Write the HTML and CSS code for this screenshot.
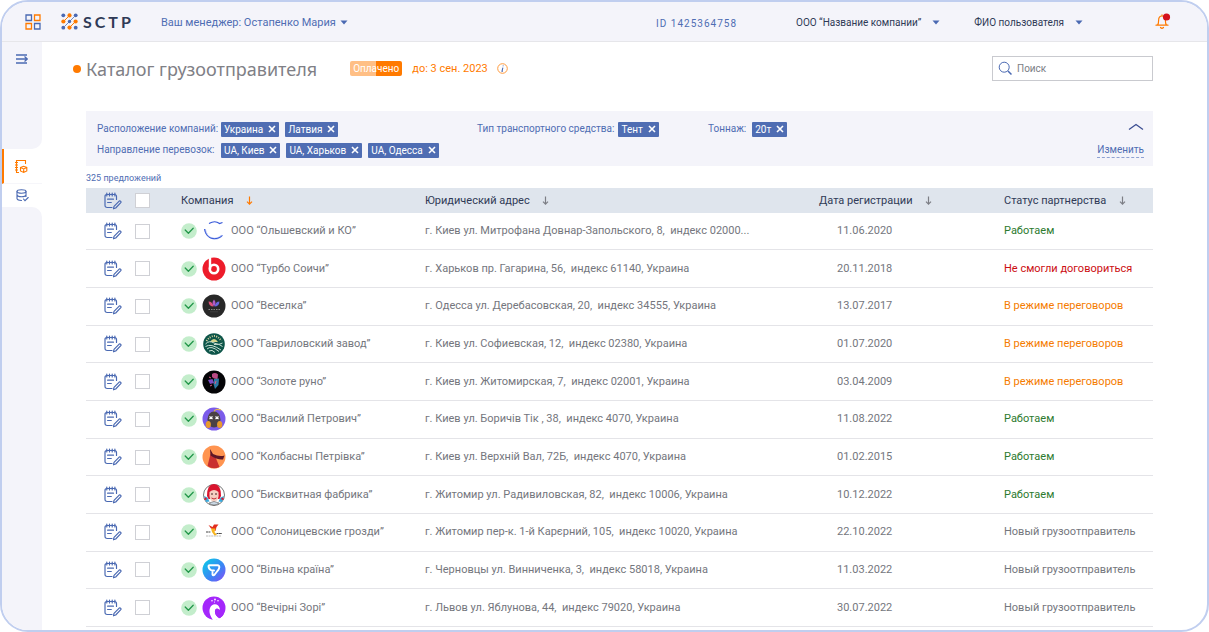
FILE: index.html
```html
<!DOCTYPE html>
<html lang="ru">
<head>
<meta charset="utf-8">
<meta name="viewport" content="width=device-width, initial-scale=1">
<title>SCTP — Каталог грузоотправителя</title>
<link rel="stylesheet" href="styles.css">
</head>
<body>
<svg class="sprite" aria-hidden="true">
  <symbol id="edit" viewBox="0 0 18 18">
    <g fill="none" stroke="#4a69b2" stroke-width="1.2" stroke-linecap="round" stroke-linejoin="round">
      <path d="M8 15.5H3.2Q1 15.500 1 13.300V4.500Q1 2.500 3 2.500H10.500Q12.500 2.500 12.500 4.500V7.500"/>
      <path d="M2.800 1V4M5.500 1V4M8.200 1V4M10.900 1V4M3.600 7.200H9.500M3.600 10.500H7.300"/>
      <path d="M9.500 16.800L10 14.300L15.200 9.100Q16 8.600 16.700 9.300Q17.300 10 16.800 10.700L11.700 16Z"/>
    </g>
  </symbol>
  <symbol id="ok" viewBox="0 0 16 16">
    <circle cx="8" cy="8" r="7.800" fill="#c3edcb"/>
    <path d="M4.200 7L7.400 10.300L12.200 5.300" fill="none" stroke="#23974a" stroke-width="1.300" stroke-linecap="round" stroke-linejoin="round"/>
  </symbol>
  <symbol id="cross" viewBox="0 0 8 8"><path d="M1 1L7 7M7 1L1 7" stroke="#fff" stroke-width="1.600"/></symbol>
  <symbol id="caret" viewBox="0 0 8 5"><path d="M0.500 0.500H7.500L4 4.500Z" fill="#4a69b2"/></symbol>
  <symbol id="sort" viewBox="0 0 7 9"><path d="M3.500 0.500V8M1 5.600L3.500 8.100L6 5.600" fill="none" stroke="currentColor" stroke-width="1.200"/></symbol>
</svg>
<div class="frame">
  <header class="topbar">
    <button class="icon-button" type="button" aria-label="Приложения">
      <svg width="16" height="16" viewBox="0 0 16 16" fill="none" stroke-width="1.300"><path d="M1 1H6.500V6.500H1ZM9.500 9.500H15V15H9.500Z" stroke="#4a69b2"/><path d="M9.500 1H15V6.500H9.500ZM1 9.500H6.500V15H1Z" stroke="#ff7a00"/></svg>
    </button>
    <a class="brand" href="#">
      <svg width="17" height="17" viewBox="0 0 17 17">
        <path d="M2.500 8.500L8.500 2.500M8.500 14.500L14.500 8.500" stroke="#ff7a00" stroke-width="1"/>
        <path d="M3.500 13.500L13.500 3.500" stroke="#4a69b2" stroke-width=".8"/>
        <g fill="#4a69b2"><circle cx="2.300" cy="2.300" r="1.900"/><circle cx="14.700" cy="2.300" r="1.900"/><circle cx="8.500" cy="8.500" r="1.700"/><circle cx="2.300" cy="14.700" r="1.900"/><circle cx="14.700" cy="14.700" r="1.900"/></g>
        <g fill="#ff7a00"><circle cx="8.500" cy="2.400" r="2.100"/><circle cx="2.400" cy="8.500" r="2.100"/><circle cx="14.600" cy="8.500" r="2.100"/><circle cx="8.500" cy="14.600" r="2.100"/></g>
      </svg>
      <span class="brand-name">SCTP</span>
    </a>
    <button class="menu manager" type="button">Ваш менеджер: Остапенко Мария <svg width="8" height="5"><use href="#caret"/></svg></button>
    <span class="account-id">ID 1425364758</span>
    <button class="menu company" type="button">ООО “Название компании” <svg width="8" height="5"><use href="#caret"/></svg></button>
    <button class="menu user" type="button">ФИО пользователя <svg width="8" height="5"><use href="#caret"/></svg></button>
    <button class="icon-button bell" type="button" aria-label="Уведомления">
      <svg width="16" height="17" viewBox="0 0 16 17"><path d="M2.500 12Q3.600 11 3.600 7.500Q3.600 3 7 3Q10.400 3 10.400 7.500Q10.400 11 11.500 12ZM1 12.200H13M5.500 14.500Q7 16 8.500 14.500M7 1.800V3" fill="none" stroke="#ff7a00" stroke-width="1.200" stroke-linecap="round"/><circle cx="11.500" cy="4" r="3.600" fill="#d4101c"/></svg>
    </button>
  </header>
  <div class="body">
    <nav class="sidebar" aria-label="Разделы">
      <div class="side-top">
        <button class="icon-button" type="button" aria-label="Развернуть меню">
          <svg width="14" height="12" viewBox="0 0 14 12" fill="none" stroke="#4a69b2" stroke-width="1.300"><path d="M1 2H12M1 6H12.500M1 10H12M9.500 3.500L12.300 6L9.500 8.500"/></svg>
        </button>
      </div>
      <a class="side-link active" href="#" aria-label="Каталог">
        <svg width="14" height="15" viewBox="0 0 14 15" fill="none" stroke="#ff7a00" stroke-width="1.100"><path d="M11.500 5V1.500H2.500V13.500H5M1 3.500H4M1 6H4M1 8.500H4M1 11H4"/><path d="M6.500 8.500L9.500 7.300L12.800 8.500V12L9.700 13.500L6.500 12ZM6.500 8.500L9.700 10L12.800 8.500M9.700 10V13"/></svg>
      </a>
      <a class="side-link" href="#" aria-label="База данных">
        <svg width="13" height="13" viewBox="0 0 13 13" fill="none" stroke="#4a69b2" stroke-width="1.100" stroke-linecap="round"><ellipse cx="5.500" cy="2.500" rx="4.500" ry="1.700"/><path d="M1 2.500V9.700Q1.500 11.500 5.500 11.500M10 2.500V7.500M1 6Q1.500 7.700 5.500 7.700Q9.500 7.700 10 6M7.500 10L9 11.700L12.200 8.500"/></svg>
      </a>
      <div class="side-bottom"></div>
    </nav>
    <main class="content">
      <div class="heading">
        <h1>Каталог грузоотправителя</h1>
        <span class="paid">Оплачено</span>
        <span class="until">до: 3 сен. 2023</span>
        <button class="icon-button" type="button" aria-label="Информация">
          <svg width="11" height="11" viewBox="0 0 11 11" fill="none"><circle cx="5.500" cy="5.500" r="4.800" stroke="#ff9a3d"/><path d="M5.900 4.600L5 8.200H6M6.200 2.500L6.100 3.300" stroke="#4a69b2" stroke-width="1.100"/></svg>
        </button>
        <label class="search">
          <svg width="15" height="15" viewBox="0 0 15 15" fill="none" stroke="#4a69b2"><circle cx="6.200" cy="6.200" r="5" /><path d="M10 10L13.500 13.500" stroke-width="1.500"/></svg>
          <input type="search" placeholder="Поиск" aria-label="Поиск">
        </label>
      </div>

      <section class="filters" aria-label="Фильтры">
        <div class="filter-row">
          <div class="filter wide">
            <span class="filter-label">Расположение компаний:</span>
            <span class="tag">Украина <button type="button" aria-label="Удалить Украина"><svg width="8" height="8"><use href="#cross"/></svg></button></span>
            <span class="tag">Латвия <button type="button" aria-label="Удалить Латвия"><svg width="8" height="8"><use href="#cross"/></svg></button></span>
          </div>
          <div class="filter transport">
            <span class="filter-label">Тип транспортного средства:</span>
            <span class="tag">Тент <button type="button" aria-label="Удалить Тент"><svg width="8" height="8"><use href="#cross"/></svg></button></span>
          </div>
          <div class="filter">
            <span class="filter-label">Тоннаж:</span>
            <span class="tag">20т <button type="button" aria-label="Удалить 20т"><svg width="8" height="8"><use href="#cross"/></svg></button></span>
          </div>
          <button class="icon-button collapse" type="button" aria-label="Свернуть фильтры">
            <svg width="16" height="16" viewBox="0 0 16 16" fill="none" stroke="#3d4f93" stroke-width="1.300"><path d="M1 8.500L8 3.500L15 8.500"/></svg>
          </button>
        </div>
        <div class="filter-row">
          <div class="filter wide">
            <span class="filter-label">Направление перевозок:</span>
            <span class="tag">UA, Киев <button type="button" aria-label="Удалить Киев"><svg width="8" height="8"><use href="#cross"/></svg></button></span>
            <span class="tag">UA, Харьков <button type="button" aria-label="Удалить Харьков"><svg width="8" height="8"><use href="#cross"/></svg></button></span>
            <span class="tag">UA, Одесса <button type="button" aria-label="Удалить Одесса"><svg width="8" height="8"><use href="#cross"/></svg></button></span>
          </div>
          <a class="change" href="#">Изменить</a>
        </div>
      </section>

      <p class="count">325 предложений</p>

      <div class="table-area">
      <table class="companies">
        <colgroup><col class="c-edit"><col class="c-pick"><col class="c-name"><col><col class="c-date"><col class="c-status"></colgroup>
        <thead>
          <tr>
            <th class="edit"><button type="button" aria-label="Редактировать все"><svg width="18" height="18"><use href="#edit"/></svg></button></th>
            <th><input type="checkbox" aria-label="Выбрать все"></th>
            <th>Компания <button class="sort on" type="button" aria-label="Сортировать по компании"><svg width="7" height="9"><use href="#sort"/></svg></button></th>
            <th>Юридический адрес <button class="sort" type="button" aria-label="Сортировать по адресу"><svg width="7" height="9"><use href="#sort"/></svg></button></th>
            <th>Дата регистрации <button class="sort" type="button" aria-label="Сортировать по дате"><svg width="7" height="9"><use href="#sort"/></svg></button></th>
            <th>Статус партнерства <button class="sort" type="button" aria-label="Сортировать по статусу"><svg width="7" height="9"><use href="#sort"/></svg></button></th>
          </tr>
        </thead>
        <tbody>
          <tr>
            <td class="edit"><button type="button" aria-label="Редактировать"><svg width="18" height="18"><use href="#edit"/></svg></button></td>
            <td><input type="checkbox" aria-label="Выбрать Ольшевский и КО"></td>
            <td><div class="company-cell"><svg width="16" height="16"><use href="#ok"/></svg>
              <svg width="24" height="24" viewBox="0 0 24 24" fill="none"><path d="M3 10Q4 18 11 19.500Q16 20.500 20 16.500" stroke="#b9c6f5" stroke-width="1.800"/><path d="M7 4.500Q13 1 17.500 4.500L20.500 3.500" stroke="#3456d8" stroke-width="1.200"/><path d="M2.500 10Q3.500 17 9 19.200Q15.500 21 20.500 16.500" stroke="#3456d8" stroke-width="1"/></svg>
              ООО “Ольшевский и КО”</div></td>
            <td>г. Киев ул. Митрофана Довнар-Запольского, 8,&nbsp; индекс 02000...</td><td class="date">11.06.2020</td><td class="good">Работаем</td>
          </tr>
          <tr>
            <td class="edit"><button type="button" aria-label="Редактировать"><svg width="18" height="18"><use href="#edit"/></svg></button></td>
            <td><input type="checkbox" aria-label="Выбрать Турбо Соичи"></td>
            <td><div class="company-cell"><svg width="16" height="16"><use href="#ok"/></svg>
              <svg width="24" height="24" viewBox="0 0 24 24"><circle cx="12" cy="12" r="11.500" fill="#ed1c2b"/><path d="M8 1V12" stroke="#fff" stroke-width="2.400"/><circle cx="12" cy="12" r="4.200" fill="none" stroke="#fff" stroke-width="2.600"/></svg>
              ООО “Турбо Соичи”</div></td>
            <td>г. Харьков пр. Гагарина, 56,&nbsp; индекс 61140, Украина</td><td class="date">20.11.2018</td><td class="bad">Не смогли договориться</td>
          </tr>
          <tr>
            <td class="edit"><button type="button" aria-label="Редактировать"><svg width="18" height="18"><use href="#edit"/></svg></button></td>
            <td><input type="checkbox" aria-label="Выбрать Веселка"></td>
            <td><div class="company-cell"><svg width="16" height="16"><use href="#ok"/></svg>
              <svg width="24" height="24" viewBox="0 0 24 24"><circle cx="12" cy="12" r="11.500" fill="#282828"/><path d="M6.500 7.500Q10.500 7.500 11.500 12.500Q7 12.500 6.500 7.500Z" fill="#e0537c"/><path d="M17.500 7.500Q13.500 7.500 12.500 12.500Q17 12.500 17.500 7.500Z" fill="#6867e0"/><path d="M12 5.500Q15 9 12 12.500Q9 9 12 5.500Z" fill="#b05ac5"/><path d="M6.500 15.500H18" stroke="#888" stroke-dasharray="1.500 1"/><path d="M8 17.800H16" stroke="#555" stroke-width=".5"/></svg>
              ООО “Веселка”</div></td>
            <td>г. Одесса ул. Деребасовская, 20,&nbsp; индекс 34555, Украина</td><td class="date">13.07.2017</td><td class="talks">В режиме переговоров</td>
          </tr>
          <tr>
            <td class="edit"><button type="button" aria-label="Редактировать"><svg width="18" height="18"><use href="#edit"/></svg></button></td>
            <td><input type="checkbox" aria-label="Выбрать Гавриловский завод"></td>
            <td><div class="company-cell"><svg width="16" height="16"><use href="#ok"/></svg>
              <svg width="24" height="24" viewBox="0 0 24 24" fill="none"><circle cx="12" cy="12" r="10.800" fill="#0d5549"/><path d="M4.500 9Q12 -1 19.500 9" stroke="#d9d3a0" stroke-width="2" stroke-dasharray="1 1.300"/><path d="M8 10Q12 4 16 10" fill="#d8d48b"/><path d="M3.500 12Q7 8 12 11T20.500 11M3.500 14.500Q9 11 19 18M5 17Q9 13 17 19.500M7 19Q10 17 13 20.500M12 12.500Q17 11 20.500 14.500" stroke="#c7ded2" stroke-width="1"/></svg>
              ООО “Гавриловский завод”</div></td>
            <td>г. Киев ул. Софиевская, 12,&nbsp; индекс 02380, Украина</td><td class="date">01.07.2020</td><td class="talks">В режиме переговоров</td>
          </tr>
          <tr>
            <td class="edit"><button type="button" aria-label="Редактировать"><svg width="18" height="18"><use href="#edit"/></svg></button></td>
            <td><input type="checkbox" aria-label="Выбрать Золоте руно"></td>
            <td><div class="company-cell"><svg width="16" height="16"><use href="#ok"/></svg>
              <svg width="24" height="24" viewBox="0 0 24 24"><circle cx="12" cy="12" r="11.500" fill="#050507"/><path d="M10 4Q13 2 16 4.500L15.500 9Q12 9.500 10 7Z" fill="#b94a84"/><path d="M12 9L17 8.500L16.500 15L13 19L11.500 14Z" fill="#2c7aa3"/><path d="M6 10L10.500 9L12 13L8 14Z" fill="#7b4ec2"/><path d="M7 7L9 8M8 16L10 15M14 11L13 14" stroke="#e05a86"/></svg>
              ООО “Золоте руно”</div></td>
            <td>г. Киев ул. Житомирская, 7,&nbsp; индекс 02001, Украина</td><td class="date">03.04.2009</td><td class="talks">В режиме переговоров</td>
          </tr>
          <tr>
            <td class="edit"><button type="button" aria-label="Редактировать"><svg width="18" height="18"><use href="#edit"/></svg></button></td>
            <td><input type="checkbox" aria-label="Выбрать Василий Петрович"></td>
            <td><div class="company-cell"><svg width="16" height="16"><use href="#ok"/></svg>
              <svg width="24" height="24" viewBox="0 0 24 24"><circle cx="12" cy="12" r="11.500" fill="#7b5bea"/><path d="M12 5Q13 1 19 3" fill="none" stroke="#e0b250" stroke-width="1.300"/><ellipse cx="12" cy="12.500" rx="6.500" ry="8" fill="#4a4145"/><path d="M7.500 9.500L10.500 12M10.500 9.500L7.500 12M13.500 9.500L16.500 12M16.500 9.500L13.500 12" stroke="#fff" stroke-width="1.100"/><ellipse cx="6.300" cy="17.500" rx="2.600" ry="3.500" fill="#e89a2d"/><ellipse cx="17.700" cy="17.500" rx="2.600" ry="3.500" fill="#e89a2d"/></svg>
              ООО “Василий Петрович”</div></td>
            <td>г. Киев ул. Боричів Тік , 38,&nbsp; индекс 4070, Украина</td><td class="date">11.08.2022</td><td class="good">Работаем</td>
          </tr>
          <tr>
            <td class="edit"><button type="button" aria-label="Редактировать"><svg width="18" height="18"><use href="#edit"/></svg></button></td>
            <td><input type="checkbox" aria-label="Выбрать Колбасны Петрівка"></td>
            <td><div class="company-cell"><svg width="16" height="16"><use href="#ok"/></svg>
              <svg width="24" height="24" viewBox="0 0 24 24"><circle cx="12" cy="12" r="11.500" fill="#ff9450"/><path d="M8.500 9L13 11L17.500 22Q11 25 5.500 21Z" fill="#c9302f"/><path d="M8 4L11 9Q17 12 22.500 10.500L21 14.500Q15 15 8.500 10.500Z" fill="#5e1728"/></svg>
              ООО “Колбасны Петрівка”</div></td>
            <td>г. Киев ул. Верхній Вал, 72Б,&nbsp; индекс 4070, Украина</td><td class="date">01.02.2015</td><td class="good">Работаем</td>
          </tr>
          <tr>
            <td class="edit"><button type="button" aria-label="Редактировать"><svg width="18" height="18"><use href="#edit"/></svg></button></td>
            <td><input type="checkbox" aria-label="Выбрать Бисквитная фабрика"></td>
            <td><div class="company-cell"><svg width="16" height="16"><use href="#ok"/></svg>
              <svg width="24" height="24" viewBox="0 0 24 24"><circle cx="12" cy="12" r="10.500" fill="#fff" stroke="#555" stroke-width=".8"/><path d="M5 13Q5 1 12 1Q19 1 19 13L17.500 16H6.500Z" fill="#d9142e"/><path d="M7.500 9Q12 5 16.500 9Q17.500 18 12 19Q6.500 18 7.500 9Z" fill="#f5cfc1"/><path d="M9 11H11M13 11H15" stroke="#422"/><path d="M9.500 15Q12 17 14.500 15" fill="none" stroke="#c12d35"/><path d="M2 13L5.500 14.500L7.500 18.500L4 19Z" fill="#39a9dc"/><path d="M22 13L18.500 14.500L16.500 18.500L20 19Z" fill="#39a9dc"/><path d="M2.500 15.500L4.500 16M21.500 15.500L19.500 16" stroke="#d9142e" stroke-width="2"/><path d="M7 20L12 18.500L17 20Q12 24 7 20Z" fill="#cbd9e5" stroke="#444" stroke-width=".5"/></svg>
              ООО “Бисквитная фабрика”</div></td>
            <td>г. Житомир ул. Радивиловская, 82,&nbsp; индекс 10006, Украина</td><td class="date">10.12.2022</td><td class="good">Работаем</td>
          </tr>
          <tr>
            <td class="edit"><button type="button" aria-label="Редактировать"><svg width="18" height="18"><use href="#edit"/></svg></button></td>
            <td><input type="checkbox" aria-label="Выбрать Солоницевские грозди"></td>
            <td><div class="company-cell"><svg width="16" height="16"><use href="#ok"/></svg>
              <svg width="24" height="24" viewBox="0 0 24 24"><path d="M6.500 5L10.500 7L12 4.500H16.500L14.500 7L13.500 11L9 8.500Z" fill="#e22d1d"/><path d="M9 8.500L13.500 8.500L12.500 12L15 15L12.500 15.500L10 12Z" fill="#f7b51f"/><path d="M4 12H8.500M14.500 13.500H20" stroke="#444" stroke-width="1.200" stroke-dasharray="2 .4"/><path d="M4 16H19" stroke="#aaa" stroke-width=".8" stroke-dasharray="2 .6"/></svg>
              ООО “Солоницевские грозди”</div></td>
            <td>г. Житомир пер-к. 1-й Карєрний, 105,&nbsp; индекс 10020, Украина</td><td class="date">22.10.2022</td><td>Новый грузоотправитель</td>
          </tr>
          <tr>
            <td class="edit"><button type="button" aria-label="Редактировать"><svg width="18" height="18"><use href="#edit"/></svg></button></td>
            <td><input type="checkbox" aria-label="Выбрать Вільна країна"></td>
            <td><div class="company-cell"><svg width="16" height="16"><use href="#ok"/></svg>
              <svg width="24" height="24" viewBox="0 0 24 24"><defs><linearGradient id="blue" x2="1" y2="1"><stop offset=".1" stop-color="#10c4e8"/><stop offset=".6" stop-color="#3d82f5"/><stop offset="1" stop-color="#8a4bf5"/></linearGradient></defs><circle cx="12" cy="12" r="11.500" fill="url(#blue)"/><path d="M12 12.500H9.500Q6.500 11 6.500 8Q6.500 7.300 7.500 7.300H15.500Q17.500 7.500 17.300 9.500Q17 11.500 15 13.500L12.500 16.800Q11.200 18 10.500 16.500V14.500" fill="none" stroke="#fff" stroke-width="1.900" stroke-linejoin="round" stroke-linecap="round"/></svg>
              ООО “Вільна країна”</div></td>
            <td>г. Черновцы ул. Винниченка, 3,&nbsp; индекс 58018, Украина</td><td class="date">11.03.2022</td><td>Новый грузоотправитель</td>
          </tr>
          <tr>
            <td class="edit"><button type="button" aria-label="Редактировать"><svg width="18" height="18"><use href="#edit"/></svg></button></td>
            <td><input type="checkbox" aria-label="Выбрать Вечірні Зорі"></td>
            <td><div class="company-cell"><svg width="16" height="16"><use href="#ok"/></svg>
              <svg width="24" height="24" viewBox="0 0 24 24"><circle cx="12" cy="12" r="11.500" fill="#a427fb"/><path d="M11 24Q6 17 8 12Q10 7.500 14.500 8.500Q17.500 9.500 18 14L15 12.500Q12.500 13 13 16.500Q13.500 20 17.500 22.500Q14 24.500 11 24Z" fill="#fff"/><path d="M13 16.500Q13.500 20 18 22L21 19.500Q23 16 22 13L18 14L15 12.500Q12.500 13 13 16.500Z" fill="#a427fb"/><g fill="#fff"><circle cx="10" cy="4.800" r=".8"/><circle cx="13" cy="3.500" r=".9"/><circle cx="16" cy="4.800" r=".8"/><circle cx="12.500" cy="6" r=".6"/></g></svg>
              ООО “Вечірні Зорі”</div></td>
            <td>г. Львов ул. Яблунова, 44,&nbsp; индекс 79020, Украина</td><td class="date">30.07.2022</td><td>Новый грузоотправитель</td>
          </tr>
        </tbody>
      </table>
      </div>
    </main>
  </div>
</div>
</body>
</html>
```
FILE: styles.css
```css
:root {
  --blue: #4f6db3;
  --orange: #ff7a00;
  --panel: #f4f4fa;
  --ink: #2f3a56;
  --gray: #74767d;
}
* { box-sizing: border-box; }
body {
  margin: 0;
  background: #fff;
  color: var(--gray);
  font-family: Roboto, "Noto Sans", sans-serif;
  font-size: 11px;
  line-height: 16px;
}
button { padding: 0; border: 0; background: none; color: inherit; font: inherit; cursor: pointer; }
a { color: inherit; text-decoration: none; }
svg { display: block; flex: none; }
.sprite { position: absolute; width: 0; height: 0; }

.frame {
  display: flex;
  flex-direction: column;
  height: 100vh;
  min-height: 600px;
  border: 2px solid #c0ceef;
  border-radius: 28px;
  overflow: hidden;
}

.topbar {
  display: flex;
  align-items: center;
  height: 40px;
  flex: none;
  padding: 0 36px 0 23px;
  background: var(--panel);
  border-bottom: 1px solid #e6e6ea;
  white-space: nowrap;
}
.brand { display: flex; align-items: center; gap: 5px; margin-left: 20px; }
.brand-name { color: var(--ink); font: 700 16px/20px Lato, sans-serif; letter-spacing: 3px; }
.menu { display: flex; align-items: center; gap: 11px; padding-top: 2px; color: var(--ink); font-size: 10px; }
.manager { gap: 4px; margin-left: 27px; margin-right: auto; color: var(--blue); font-size: 11px; }
.account-id { margin-right: 59px; padding-top: 4px; color: var(--blue); font-size: 10px; letter-spacing: 1px; }
.company { margin-right: 34px; }
.user { margin-right: 72px; }

.body { display: flex; flex: 1; min-height: 0; }
.sidebar { display: flex; flex-direction: column; flex: none; width: 40px; }
.side-top { height: 107px; padding: 11px 13px; background: var(--panel); border-radius: 0 0 10px 0; }
.side-link { display: flex; align-items: center; height: 23px; padding-left: 14px; }
.side-link.active { height: 35px; padding-left: 10px; border-left: 2px solid var(--orange); border-bottom: 1px solid #f6f6fa; }
.side-bottom { flex: 1; background: var(--panel); border-radius: 0 10px 0 0; }

.content { display: flex; flex-direction: column; flex: 1; min-width: 0; padding: 14px 54px 3px 44px; }
.heading { display: flex; align-items: center; }
h1 {
  display: flex;
  align-items: center;
  gap: 5px;
  margin: 0 33px 0 -13px;
  color: #808086;
  font: 400 18px/24px "Noto Sans", sans-serif;
}
h1::before { content: ""; width: 8px; height: 8px; border-radius: 50%; background: var(--orange); }
.paid {
  margin-right: 10px;
  padding: 0 3px;
  border-radius: 2px;
  background: linear-gradient(90deg, #ffbf85 50%, var(--orange) 50%);
  color: #fff;
  font-size: 10px;
  line-height: 15px;
}
.until { margin-right: 9px; color: var(--orange); }
.search {
  display: flex;
  align-items: center;
  gap: 4px;
  width: 161px;
  height: 25px;
  margin-left: auto;
  padding: 0 5px;
  border: 1px solid #c9cacf;
}
.search input { width: 100%; padding: 0; border: 0; outline: 0; background: none; color: var(--gray); font: inherit; font-size: 10px; }
.search input::placeholder { color: #7c7e85; }

.filters {
  display: flex;
  flex-direction: column;
  gap: 5px;
  margin-top: 30px;
  padding: 10px 9px 8px 11px;
  background: var(--panel);
  color: var(--blue);
}
.filter-row { display: flex; align-items: center; height: 16px; }
.filter { display: flex; align-items: center; gap: 6px; }
.filter.wide { width: 380px; }
.filter.wide .filter-label { width: 118px; }
.filter.transport { gap: 4px; width: 231px; }
.filter-label { font-size: 10px; white-space: nowrap; }
.tag {
  display: flex;
  align-items: center;
  gap: 5px;
  padding: 0 3px;
  border-radius: 1px;
  background: var(--blue);
  color: #fff;
  font-size: 10px;
  line-height: 15px;
  white-space: nowrap;
}
.collapse, .change { margin-left: auto; }
.change { border-bottom: 1px dashed #8fa2d3; font-size: 10px; line-height: 14px; }

.count { margin: 6px 0 4px; color: var(--blue); font-size: 9px; line-height: 12px; }

.table-area { flex: 1; min-height: 0; }
.companies { width: 100%; height: 100%; table-layout: fixed; border-collapse: collapse; }
.c-edit { width: 49px; }
.c-pick { width: 46px; }
.c-name { width: 244px; }
.c-date { width: 185px; }
.c-status { width: 149px; }
th, td { padding: 0; text-align: left; white-space: nowrap; font-weight: 400; }
th { height: 25px; background: #dfe5ed; color: var(--ink); }
td { border-bottom: 1px solid #e4e4e8; }
.edit { padding-left: 18px; }
.edit button { display: block; }
input[type="checkbox"] {
  display: block;
  appearance: none;
  width: 15px;
  height: 15px;
  margin: 0;
  border: 1px solid #cfd0d5;
  background: #fff;
}
input[type="checkbox"]:checked { background: var(--blue); }
.sort { margin-left: 10px; color: #7c7e85; vertical-align: middle; }
.sort.on { color: var(--orange); }
.company-cell { display: flex; align-items: center; gap: 5px; }
.date { padding-left: 18px; }
.good { color: #2c7a2e; }
.bad { color: #cc0d12; }
.talks { color: #f57c00; }
```
